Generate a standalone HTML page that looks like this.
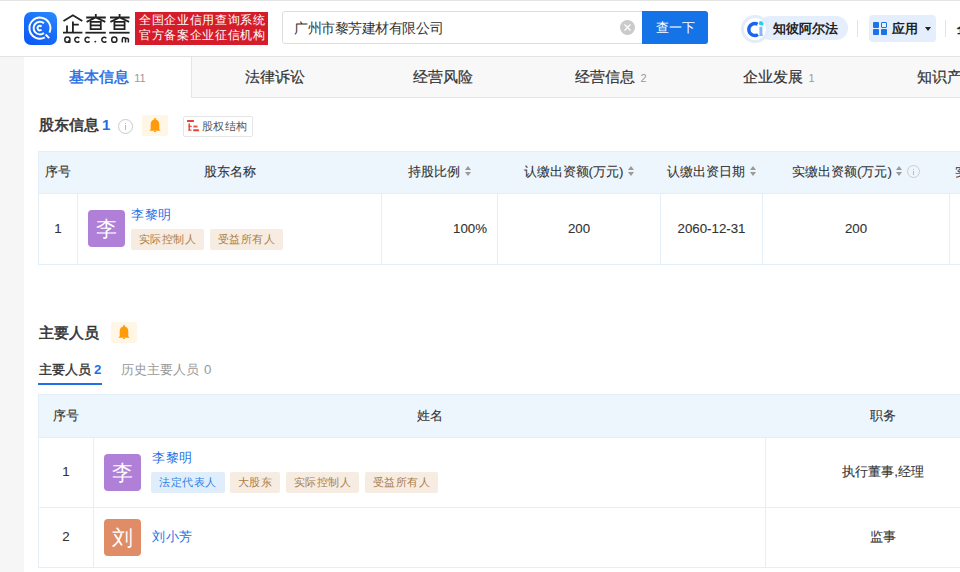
<!DOCTYPE html>
<html><head><meta charset="utf-8">
<style>
*{box-sizing:border-box;margin:0;padding:0}
html,body{width:960px;height:572px;overflow:hidden;background:#f6f6f6;font-family:"Liberation Sans",sans-serif;color:#333}
.abs{position:absolute}
#hdr{position:absolute;left:0;top:0;width:960px;height:57px;background:#fff;border-bottom:1px solid #e3e3e3;box-shadow:inset 0 1px 0 #e4e4e4}
#main{position:absolute;left:24px;top:57px;width:936px;height:515px;background:#fff}
#tabs{position:absolute;left:0;top:0;width:936px;height:41px;background:#f8f8f8;border-bottom:1px solid #e6e6e6}
.tab{position:absolute;top:0;height:41px;width:168px;text-align:center;font-size:15px;line-height:40px;color:#333;-webkit-text-stroke:.2px #333;white-space:nowrap}
.tab .n{font-size:11px;color:#999;margin-left:5px;-webkit-text-stroke:0}
.tab.act{background:#fff;color:#1f6fe5;border-right:1px solid #e6e6e6;height:41px;-webkit-text-stroke:.45px #1f6fe5}
.sec{position:absolute;font-size:15px;font-weight:normal;color:#333;line-height:20px;-webkit-text-stroke:.55px #333}
table{border-collapse:collapse;position:absolute;table-layout:fixed}
td,th{border:1px solid #e4eef6;font-weight:normal;font-size:14px;color:#333}
th{background:#eef6fd;text-align:center}
.av{position:absolute;width:37px;height:37px;border-radius:4px;color:#fff;font-size:21px;text-align:center;line-height:37px}
.nm{position:absolute;color:#1f6fe5;font-size:13px;letter-spacing:.5px;line-height:16px;white-space:nowrap}
.tag{position:absolute;height:21px;line-height:21px;font-size:11px;letter-spacing:.5px;text-align:center;padding:0 6px;border-radius:2px;background:#f6ece1;color:#ab7c4c;white-space:nowrap}
.tag.b{background:#e0eefc;color:#2f7fe4}
.sort{display:inline-block;width:6px;height:10px;vertical-align:middle;margin-left:4px;position:relative;top:-1px}
.th{position:absolute;font-size:13.3px;line-height:20px;color:#333;-webkit-text-stroke:.1px #333;text-align:center;white-space:nowrap}
.td{position:absolute;font-size:13.3px;line-height:20px;color:#333;-webkit-text-stroke:.1px #333;text-align:center;white-space:nowrap}
.srt{display:inline-block;width:7px;height:11px;margin-left:4px;vertical-align:-1px;background:linear-gradient(#999,#999) 0 0/0 0 no-repeat;position:relative}
.srt:before{content:"";position:absolute;left:0.5px;top:0;border-left:3px solid transparent;border-right:3px solid transparent;border-bottom:4px solid #999}
.srt:after{content:"";position:absolute;left:0.5px;top:6px;border-left:3px solid transparent;border-right:3px solid transparent;border-top:4px solid #999}
.inf{display:inline-block;width:13px;height:13px;border:1px solid #ccc;border-radius:50%;margin-left:4px;vertical-align:-2px;position:relative}
.inf:before{content:"";position:absolute;left:4.9px;top:2.5px;width:1.3px;height:1.3px;background:#bbb}
.inf:after{content:"";position:absolute;left:4.9px;top:4.8px;width:1.3px;height:4.6px;background:#bbb}
</style></head><body>
<div id="hdr">
  <!-- logo icon -->
  <div class="abs" style="left:24px;top:11.5px;width:33px;height:33px;border-radius:7px;background:linear-gradient(30deg,#0a56f4 0%,#1a6ffa 55%,#2a8cfd 100%)"></div>
  <svg class="abs" style="left:0;top:0" width="140" height="56" viewBox="0 0 140 56">
    <g transform="translate(24 11.5)" fill="none" stroke="#fff" stroke-width="1.95" stroke-linecap="butt">
      <path d="M25.42 21.04 A10.5 10.5 0 1 0 20.83 25.87"/>
      <path d="M21.6 23 L25.2 26.6"/>
      <path d="M19.95 11.77 A6.3 6.3 0 1 0 19.95 21.43"/>
      <path d="M17.5 15.1 A2.3 2.3 0 1 0 17.5 18.1"/>
    </g>
    <g fill="none" stroke="#222" stroke-width="1.8" stroke-linecap="butt" stroke-linejoin="miter">
      <path d="M63.5 21 L72.9 15.2 L82.3 21"/>
      <path d="M72.9 21.5 V32.7 M72.9 24.6 H78.8 M67 25.4 V32.7 M63 32.7 H82.4"/>
      <g id="cha">
        <path d="M86.2 17.5 H105.8 M95.8 14 V17.5 M95.8 17.5 L86.6 21.9 M95.8 17.5 L105.3 21.9"/>
        <path d="M90.6 21.8 H100.8 V29.2 H90.6 Z M90.6 25.4 H100.8"/>
        <path d="M85.4 32.7 H105.8"/>
      </g>
      <use href="#cha" transform="translate(23.8 0)"/>
    </g>
    <g fill="none" stroke="#222" stroke-width="1.5">
      <circle cx="67.4" cy="39.7" r="2.6"/>
      <path d="M68.2 40.6 L70.3 42.6"/>
      <path d="M79.3 38.2 A2.5 2.5 0 1 0 79.3 41.2"/>
      <path d="M89.5 38.2 A2.5 2.5 0 1 0 89.5 41.2"/>
      <path d="M106.3 38.2 A2.5 2.5 0 1 0 106.3 41.2"/>
      <circle cx="114.3" cy="39.7" r="2.6"/>
      <path d="M122.3 42.4 V39.2 A1.6 1.6 0 0 1 125.5 39.2 V42.4 M125.5 39.2 A1.6 1.6 0 0 1 128.4 39.2 V42.4"/>
    </g>
    <circle cx="95.3" cy="41.6" r="0.95" fill="#222"/>
  </svg>
  <div class="abs" style="left:135px;top:11.6px;width:133px;height:33px;background:#d51c2a;color:#fff;font-size:12px;line-height:14.5px;padding:1.9px 0 0 4px;letter-spacing:.65px;white-space:nowrap">全国企业信用查询系统<br>官方备案企业征信机构</div>
  <!-- search -->
  <div class="abs" style="left:282px;top:11px;width:362px;height:33px;border:1px solid #dedede;border-radius:3px 0 0 3px;background:#fff"></div>
  <div class="abs" style="left:294px;top:17.5px;font-size:14px;letter-spacing:-.45px;line-height:20px;color:#333">广州市黎芳建材有限公司</div>
  <div class="abs" style="left:620px;top:20px;width:15px;height:15px;border-radius:50%;background:#cacaca">
    <svg width="15" height="15" viewBox="0 0 15 15" style="position:absolute;left:0;top:0"><path d="M4.5 4.5L10.5 10.5M10.5 4.5L4.5 10.5" stroke="#fff" stroke-width="1.3"/></svg>
  </div>
  <div class="abs" style="left:642px;top:11px;width:66px;height:33px;background:#1473e6;border-radius:0 3px 3px 0;color:#fff;font-size:13px;line-height:33px;text-align:center">查一下</div>
  <!-- zhibi alpha -->
  <div class="abs" style="left:758px;top:16px;width:90px;height:24px;border-radius:12px;background:#e4eefc"></div>
  <div class="abs" style="left:740.5px;top:14.5px;width:28.5px;height:28.5px;border-radius:50%;background:#fff;border:3px solid #e3ecfb"></div>
  <svg class="abs" style="left:738px;top:11px" width="34" height="34" viewBox="0 0 34 34">
    <path d="M19.6 13.2 A6 6 0 1 0 20 23.6" fill="none" stroke="#1b63f2" stroke-width="3.4"/>
    <path d="M21.2 10.4 L23.6 10.1 L25.6 11.9 L25.4 14.6 L23 14.6 L21 13.4 Z" fill="#27d0f0"/>
    <path d="M21.4 15.8 H24.4 V23 L25.2 24.2 L24.2 25.1 H21.4 Z" fill="#86b6f6"/>
  </svg>
  <div class="abs" style="left:773px;top:19px;font-size:13px;font-weight:bold;line-height:20px;color:#222">知彼阿尔法</div>
  <div class="abs" style="left:857px;top:20px;width:1px;height:17px;background:#e3e3e3"></div>
  <div class="abs" style="left:869px;top:15px;width:67px;height:27px;border-radius:4px;background:#e4eefc"></div>
  <div class="abs" style="left:873px;top:22px;width:14px;height:13px">
    <div class="abs" style="left:0;top:0;width:6px;height:6px;background:#1a73e8;border-radius:1px"></div>
    <div class="abs" style="left:8px;top:0;width:6px;height:6px;border:1.5px solid #1a73e8;border-radius:1px"></div>
    <div class="abs" style="left:0;top:7px;width:6px;height:6px;background:#1a73e8;border-radius:1px"></div>
    <div class="abs" style="left:8px;top:7px;width:6px;height:6px;background:#1a73e8;border-radius:1px"></div>
  </div>
  <div class="abs" style="left:892px;top:19px;font-size:13px;font-weight:bold;line-height:20px;color:#222">应用</div>
  <div class="abs" style="left:925px;top:27px;width:0;height:0;border-left:3.5px solid transparent;border-right:3.5px solid transparent;border-top:4px solid #222"></div>
  <div class="abs" style="left:945px;top:20px;width:1px;height:17px;background:#e3e3e3"></div>
  <div class="abs" style="left:957px;top:19px;font-size:13px;font-weight:bold;line-height:20px;color:#222">企</div>
</div>

<div id="main">
  <div id="tabs">
    <div class="tab act" style="left:0">基本信息<span class="n">11</span></div>
    <div class="tab" style="left:167px">法律诉讼</div>
    <div class="tab" style="left:335px">经营风险</div>
    <div class="tab" style="left:503px">经营信息<span class="n">2</span></div>
    <div class="tab" style="left:671px">企业发展<span class="n">1</span></div>
    <div class="tab" style="left:839px">知识产权</div>
  </div>
</div>


<!-- section 1 -->
<div class="sec" style="left:39px;top:115px">股东信息<span style="color:#1f6fe5;margin-left:3px;font-weight:bold;-webkit-text-stroke:0">1</span></div>
<div class="abs" style="left:118px;top:118.5px;width:15px;height:15px;border-radius:50%;border:1px solid #c9c9c9">
  <div class="abs" style="left:6px;top:3px;width:1.4px;height:1.4px;background:#bbb"></div>
  <div class="abs" style="left:6px;top:5.5px;width:1.4px;height:5px;background:#bbb"></div>
</div>
<div class="abs" style="left:142px;top:114.7px;width:26px;height:21px;background:#fff6e6;border-radius:2px">
  <svg width="26" height="21" viewBox="0 0 26 21" style="position:absolute;left:0;top:0"><circle cx="13" cy="4" r="1" fill="#ff9a0a"/><path d="M8.7 14.3 V9.4 C8.7 6.6 10.5 4.6 13 4.6 C15.5 4.6 17.3 6.6 17.3 9.4 V14.3 L18.6 15.8 H7.4 Z M11.3 15.6 Q13 18.8 14.7 15.6 Z" fill="#ff9a0a"/></svg>
</div>
<div class="abs" style="left:183px;top:115.5px;width:70px;height:21px;border:1px solid #e6e6e6;border-radius:2px;background:#fff"></div>
<svg class="abs" style="left:180px;top:112px" width="30" height="26" viewBox="0 0 30 26">
  <rect x="7" y="8" width="7" height="1.9" rx=".5" fill="#e84038"/>
  <rect x="8.5" y="11.4" width="1.4" height="7.2" fill="#e84038"/>
  <rect x="8.5" y="13.7" width="3.2" height="1.2" fill="#e84038"/>
  <rect x="8.5" y="17.5" width="3" height="1.2" rx=".5" fill="#e84038"/>
  <rect x="13.3" y="13.6" width="4.3" height="2" rx=".6" fill="#ef5a3a"/>
  <rect x="13.2" y="17.3" width="5.8" height="2" rx=".6" fill="#e84038"/>
</svg>
<div class="abs" style="left:202px;top:118px;font-size:11px;letter-spacing:.3px;line-height:16px;color:#555">股权结构</div>

<!-- table 1 -->
<div class="abs" style="left:38px;top:151px;width:930px;height:114px;border:1px solid #e4eef6"></div>
<div class="abs" style="left:39px;top:152px;width:930px;height:41px;background:#eef6fd"></div>
<div class="abs" style="left:38px;top:193px;width:930px;height:1px;background:#e4eef6"></div>
<div class="abs" style="left:77px;top:193px;width:1px;height:72px;background:#e4eef6"></div>
<div class="abs" style="left:381px;top:193px;width:1px;height:72px;background:#e4eef6"></div>
<div class="abs" style="left:497px;top:193px;width:1px;height:72px;background:#e4eef6"></div>
<div class="abs" style="left:660px;top:193px;width:1px;height:72px;background:#e4eef6"></div>
<div class="abs" style="left:762px;top:193px;width:1px;height:72px;background:#e4eef6"></div>
<div class="abs" style="left:949px;top:193px;width:1px;height:72px;background:#e4eef6"></div>

<div class="th" style="left:38px;width:40px;top:162px">序号</div>
<div class="th" style="left:77px;width:305px;top:162px">股东名称</div>
<div class="th" style="left:381px;width:117px;top:162px">持股比例<i class="srt"></i></div>
<div class="th" style="left:497px;width:164px;top:162px">认缴出资额(万元)<i class="srt"></i></div>
<div class="th" style="left:660px;width:103px;top:162px">认缴出资日期<i class="srt"></i></div>
<div class="th" style="left:762px;width:188px;top:162px">实缴出资额(万元)<i class="srt"></i><i class="inf"></i></div>
<div class="th" style="left:949px;width:200px;top:162px;text-align:left;padding-left:6px">实缴出资日期</div>

<div class="td" style="left:38px;width:40px;top:219px">1</div>
<div class="av" style="left:88px;top:210px;background:#b07fd8">李</div>
<div class="nm" style="left:131px;top:207px">李黎明</div>
<div class="tag" style="left:131px;top:229px;width:73px">实际控制人</div>
<div class="tag" style="left:210px;top:229px;width:73px">受益所有人</div>
<div class="td" style="left:381px;width:106px;top:219px;text-align:right">100%</div>
<div class="td" style="left:497px;width:164px;top:219px">200</div>
<div class="td" style="left:660px;width:103px;top:219px">2060-12-31</div>
<div class="td" style="left:762px;width:188px;top:219px">200</div>

<!-- section 2 -->
<div class="sec" style="left:39px;top:323px">主要人员</div>
<div class="abs" style="left:111px;top:322.3px;width:26px;height:21px;background:#fff6e6;border-radius:2px">
  <svg width="26" height="21" viewBox="0 0 26 21" style="position:absolute;left:0;top:0"><circle cx="13" cy="4" r="1" fill="#ff9a0a"/><path d="M8.7 14.3 V9.4 C8.7 6.6 10.5 4.6 13 4.6 C15.5 4.6 17.3 6.6 17.3 9.4 V14.3 L18.6 15.8 H7.4 Z M11.3 15.6 Q13 18.8 14.7 15.6 Z" fill="#ff9a0a"/></svg>
</div>
<div class="abs" style="left:39px;top:361px;font-size:13.3px;line-height:18px;color:#333;-webkit-text-stroke:.35px #333">主要人员<b style="color:#1f6fe5;margin-left:3px;-webkit-text-stroke:0">2</b></div>
<div class="abs" style="left:38px;top:382.5px;width:64px;height:2px;background:#1f6fe5"></div>
<div class="abs" style="left:121px;top:361px;font-size:13.3px;line-height:18px;color:#999">历史主要人员<span style="margin-left:5px">0</span></div>

<!-- table 2 -->
<div class="abs" style="left:38px;top:394px;width:930px;height:174px;border:1px solid #e4eef6"></div>
<div class="abs" style="left:39px;top:395px;width:930px;height:42px;background:#eef6fd"></div>
<div class="abs" style="left:38px;top:437px;width:930px;height:1px;background:#e4eef6"></div>
<div class="abs" style="left:38px;top:507px;width:930px;height:1px;background:#e4eef6"></div>
<div class="abs" style="left:93px;top:437px;width:1px;height:131px;background:#e4eef6"></div>
<div class="abs" style="left:765px;top:437px;width:1px;height:131px;background:#e4eef6"></div>

<div class="th" style="left:38px;width:56px;top:406px">序号</div>
<div class="th" style="left:93px;width:673px;top:406px">姓名</div>
<div class="th" style="left:765px;width:236px;top:406px">职务</div>

<div class="td" style="left:38px;width:56px;top:462px">1</div>
<div class="av" style="left:104px;top:454px;background:#b07fd8">李</div>
<div class="nm" style="left:152px;top:450px">李黎明</div>
<div class="tag b" style="left:151px;top:472px;width:74px">法定代表人</div>
<div class="tag" style="left:230px;top:472px;width:50px">大股东</div>
<div class="tag" style="left:286px;top:472px;width:73px">实际控制人</div>
<div class="tag" style="left:365px;top:472px;width:73px">受益所有人</div>
<div class="td" style="left:765px;width:236px;top:462px">执行董事,经理</div>

<div class="td" style="left:38px;width:56px;top:527px">2</div>
<div class="av" style="left:104px;top:519px;background:#e08c66">刘</div>
<div class="nm" style="left:152px;top:529px">刘小芳</div>
<div class="td" style="left:765px;width:236px;top:527px">监事</div>
</body></html>
